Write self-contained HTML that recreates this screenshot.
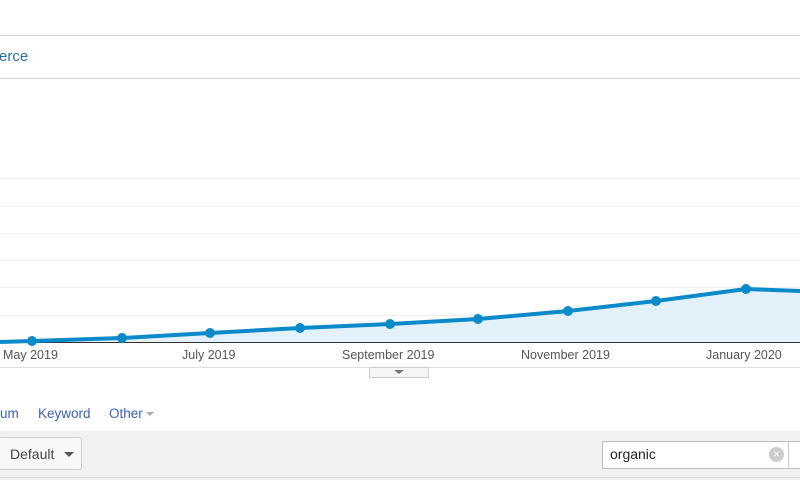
<!DOCTYPE html>
<html><head><meta charset="utf-8"><style>
body{margin:0;width:800px;height:480px;overflow:hidden;background:#fff;font-family:"Liberation Sans",Arial,sans-serif;position:relative}
.abs{position:absolute}
</style></head><body>
<div class="abs" style="left:0;top:35px;width:800px;height:1px;background:#d4d4d4"></div>
<div class="abs" style="left:-1px;top:48px;font-size:15px;color:#2a6fa8">erce</div>
<div class="abs" style="left:0;top:78px;width:800px;height:1px;background:#d4d4d4"></div>
<svg class="abs" style="left:0;top:0" width="800" height="480">
<g stroke="#efefef" stroke-width="1">
<line x1="0" x2="800" y1="178.5" y2="178.5"/><line x1="0" x2="800" y1="206.5" y2="206.5"/>
<line x1="0" x2="800" y1="233.5" y2="233.5"/><line x1="0" x2="800" y1="260.5" y2="260.5"/>
<line x1="0" x2="800" y1="287.5" y2="287.5"/><line x1="0" x2="800" y1="315.5" y2="315.5"/>
</g>
<polygon points="0,342 32,341 122,338 210,333 300,328 390,324 478,319 568,311 656,301 746,289 800,291 800,342" fill="#e3f1fa"/>
<line x1="0" x2="800" y1="342.5" y2="342.5" stroke="#333" stroke-width="1"/>
<polyline points="0,342 32,341 122,338 210,333 300,328 390,324 478,319 568,311 656,301 746,289 800,291" fill="none" stroke="#0a8ac8" stroke-width="4" stroke-linejoin="round"/>
<g fill="#0a8ac8">
<circle cx="32" cy="341" r="5"/><circle cx="122" cy="338" r="5"/><circle cx="210" cy="333" r="5"/><circle cx="300" cy="328" r="5"/><circle cx="390" cy="324" r="5"/><circle cx="478" cy="319" r="5"/><circle cx="568" cy="311" r="5"/><circle cx="656" cy="301" r="5"/><circle cx="746" cy="289" r="5"/>
</g>
<g font-size="12.5" fill="#555" font-family="Liberation Sans, Arial, sans-serif">
<text x="3" y="359">May 2019</text><text x="182" y="359">July 2019</text><text x="342" y="359">September 2019</text><text x="521" y="359">November 2019</text><text x="706" y="359">January 2020</text>
</g>
<line x1="0" x2="800" y1="367.5" y2="367.5" stroke="#ddd"/>
<rect x="369.5" y="367.5" width="59" height="10" fill="#f6f6f6" stroke="#ccc"/>
<polygon points="394,370 404,370 399,374" fill="#777"/>
</svg>
<div class="abs" style="left:0;top:406px;font-size:13.5px;color:#3b62b6">um</div>
<div class="abs" style="left:38px;top:406px;font-size:13.5px;color:#3b62b6">Keyword</div>
<div class="abs" style="left:109px;top:406px;font-size:13.5px;color:#3b62b6">Other</div>
<div class="abs" style="left:146px;top:412px;width:0;height:0;border-left:4px solid transparent;border-right:4px solid transparent;border-top:4px solid #aaa"></div>
<div class="abs" style="left:0;top:431px;width:800px;height:49px;background:#f1f1f1"></div>
<div class="abs" style="left:0;top:477px;width:800px;height:1px;background:#ddd"></div>
<div class="abs" style="left:-2px;top:437px;width:84px;height:33px;background:#f8f8f8;border:1px solid #ccc;border-radius:3px;box-sizing:border-box"></div>
<div class="abs" style="left:10px;top:446px;font-size:14px;color:#444">Default</div>
<div class="abs" style="left:64px;top:452px;width:0;height:0;border-left:5px solid transparent;border-right:5px solid transparent;border-top:5px solid #555"></div>
<div class="abs" style="left:602px;top:441px;width:200px;height:28px;background:#fff;border:1px solid #bbb;box-sizing:border-box"></div>
<div class="abs" style="left:788px;top:441px;width:1px;height:28px;background:#ccc"></div>
<div class="abs" style="left:610px;top:446px;font-size:14px;color:#222">organic</div>
<div class="abs" style="left:769px;top:447px;width:15px;height:15px;border-radius:50%;background:#ccc;color:#fff;font-size:12px;line-height:15px;text-align:center">×</div>
</body></html>
